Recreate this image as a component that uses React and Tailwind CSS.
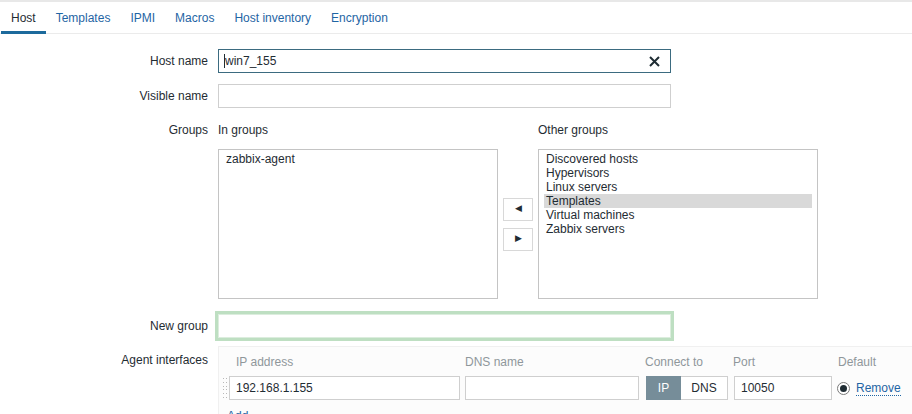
import React from "react";

const tabs = ["Host", "Templates", "IPMI", "Macros", "Host inventory", "Encryption"];
const otherGroups = ["Discovered hosts", "Hypervisors", "Linux servers", "Templates", "Virtual machines", "Zabbix servers"];

function Label({ children, className = "" }) {
  return (
    <div className={"w-[208px] shrink-0 text-right text-[#1f2c33] " + className}>
      {children}
    </div>
  );
}

export default function App() {
  return (
    <div
      className="min-h-screen bg-white text-[12px] text-[#1f2c33]"
      style={{ fontFamily: '"Liberation Sans", Arial, sans-serif' }}
    >
      <div className="h-[2px] bg-[#e8e8e8]" />

      {/* tabs */}
      <div className="flex h-[32px] border-b border-[#ebebeb]">
        {tabs.map((t, i) => (
          <div
            key={t}
            className={
              "flex items-center px-[10px] " +
              (i === 0
                ? "ml-px border-b-[3px] border-[#1c6a9c] -mb-px pt-[3px] text-[#1f2c33]"
                : "text-[#1f65a4]")
            }
          >
            {t}
          </div>
        ))}
      </div>

      <div className="flex flex-col pt-[15px]">
        {/* Host name */}
        <div className="flex items-center gap-[10px]">
          <Label>Host name</Label>
          <div className="flex h-[24px] w-[453px] items-center border border-[#3b6b80] pl-[5px] pr-[10px]">
            <span className="inline-block h-[14px] w-px bg-[#1f2c33]" />
            <span className="flex-1">win7_155</span>
            <svg width="11" height="11" viewBox="0 0 11 11">
              <path d="M1 1 L10 10 M10 1 L1 10" stroke="#1f2c33" strokeWidth="2" />
            </svg>
          </div>
        </div>

        {/* Visible name */}
        <div className="mt-[11px] flex items-center gap-[10px]">
          <Label>Visible name</Label>
          <div className="h-[24px] w-[453px] border border-[#cfcfcf]" />
        </div>

        {/* Groups */}
        <div className="mt-[11px] flex gap-[10px]">
          <Label className="leading-[22px]">Groups</Label>
          <div className="flex">
            <div className="flex flex-col">
              <div className="leading-[22px]">In groups</div>
              <div className="mt-[8px] h-[150px] w-[280px] border border-[#c4c4c4] px-[5px] pt-[2px] leading-[14px]">
                <div className="pl-[2px]">zabbix-agent</div>
              </div>
            </div>
            <div className="mt-[30px] flex flex-col justify-center gap-[7px] px-[5px]">
              <button className="flex h-[23px] w-[30px] items-center justify-center border border-[#d8d8d8] bg-white text-[9px] text-[#1f2c33]">
                ◀
              </button>
              <button className="flex h-[23px] w-[30px] items-center justify-center border border-[#d8d8d8] bg-white text-[9px] text-[#1f2c33]">
                ▶
              </button>
            </div>
            <div className="flex flex-col">
              <div className="leading-[22px]">Other groups</div>
              <div className="mt-[8px] h-[150px] w-[280px] border border-[#c4c4c4] px-[5px] pt-[2px] leading-[14px]">
                {otherGroups.map((g) => (
                  <div key={g} className={"pl-[2px] " + (g === "Templates" ? "bg-[#d9d9d9]" : "")}>
                    {g}
                  </div>
                ))}
              </div>
            </div>
          </div>
        </div>

        {/* New group */}
        <div className="mt-[15px] flex items-center gap-[10px]">
          <Label>New group</Label>
          <div className="h-[24px] w-[453px] border border-[#dcedde] shadow-[0_0_0_3px_#bedfc2]" />
        </div>

        {/* Agent interfaces */}
        <div className="mt-[8px] flex gap-[10px]">
          <Label className="pt-[6px] leading-[16px]">Agent interfaces</Label>
          <div className="flex-1 border-l border-t border-[#f0f0f0] bg-[#fcfcfc] pl-[3px] pt-[5px]">
            <div className="flex h-[20px] items-center text-[#8f979b]">
              <div className="w-[243px] pl-[14px]">IP address</div>
              <div className="w-[180px]">DNS name</div>
              <div className="w-[88px]">Connect to</div>
              <div className="w-[105px]">Port</div>
              <div>Default</div>
            </div>
            <div className="mt-[4px] flex h-[24px] items-center">
              <div className="grid h-[20px] w-[7px] grid-cols-2 content-between gap-y-[2px] pl-[1px]">
                {Array.from({ length: 12 }).map((_, i) => (
                  <span key={i} className="h-px w-px bg-[#b8b8b8]" />
                ))}
              </div>
              <div className="flex h-[24px] w-[231px] items-center border border-[#cfcfcf] bg-white pl-[6px]">
                192.168.1.155
              </div>
              <div className="ml-[5px] h-[24px] w-[174px] border border-[#cfcfcf] bg-white" />
              <div className="ml-[7px] flex h-[24px]">
                <div className="flex w-[35px] items-center justify-center bg-[#768d99] text-white">IP</div>
                <div className="flex w-[47px] items-center justify-center border border-l-0 border-[#cfcfcf] bg-white">
                  DNS
                </div>
              </div>
              <div className="ml-[6px] flex h-[24px] w-[98px] items-center border border-[#cfcfcf] bg-white pl-[6px]">
                10050
              </div>
              <div className="ml-[5px] flex h-[13px] w-[13px] items-center justify-center rounded-full border border-[#7a7a7a] bg-white">
                <span className="h-[7px] w-[7px] rounded-full bg-[#1f2c33]" />
              </div>
              <span className="ml-[6px] border-b border-dotted border-[#1f65a4] text-[#1f65a4] leading-[14px]">
                Remove
              </span>
            </div>
            <div className="mt-[7px] pl-[5px] text-[#1f65a4]">
              <span className="border-b border-dotted border-[#1f65a4]">Add</span>
            </div>
          </div>
        </div>
      </div>
    </div>
  );
}
